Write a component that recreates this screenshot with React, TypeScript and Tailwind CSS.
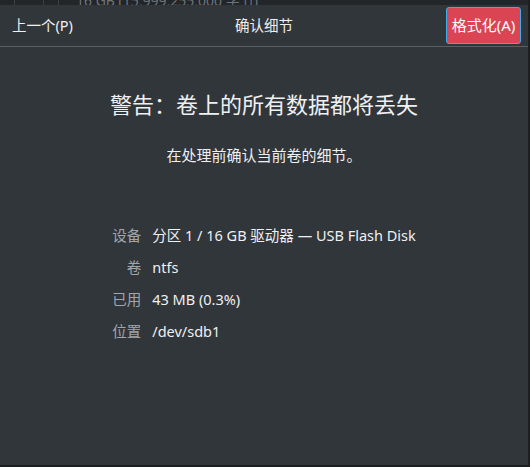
import React from "react";

const font = { fontFamily: '"Noto Sans", "Noto Sans CJK SC", sans-serif' };

const details: { label: string; value: string }[] = [
  { label: "设备", value: "分区 1 / 16 GB 驱动器 — USB Flash Disk" },
  { label: "卷", value: "ntfs" },
  { label: "已用", value: "43 MB (0.3%)" },
  { label: "位置", value: "/dev/sdb1" },
];

const App: React.FC = () => {
  return (
    <div className="w-[530px] h-[467px] bg-[#1c1f22] overflow-hidden" style={font}>
      <div className="w-[528px] h-[465px] flex flex-col bg-[#31363b]">
        {/* window behind, peeking out at the top */}
        <div className="h-[5px] bg-[#232629] overflow-hidden relative shrink-0">
          <div className="absolute left-[14px] top-0 h-full border-l border-[#3b4045]" />
          <div className="absolute left-[43px] top-0 h-full border-l border-[#3b4045]" />
          <div className="absolute left-[58px] top-0 h-full border-l border-[#3b4045]" />
          <div className="absolute left-[76px] -top-[10px] text-[14px] text-[#6e7378] whitespace-nowrap">
            16 GB (15,999,255,000 字节)
          </div>
        </div>

        {/* header bar */}
        <div className="h-[42px] shrink-0 flex items-center border-b border-[#5a5f64] px-[12px] relative">
          <span className="text-[14.5px] text-[#eff0f1]">上一个(P)</span>
          <span className="absolute left-0 right-0 text-center text-[14.5px] text-[#eff0f1] pointer-events-none">
            确认细节
          </span>
          <button className="ml-auto -mr-[5px] w-[75px] h-[37px] rounded-[3px] bg-[#da4453] border border-[#3daee9] text-[15px] text-[#fcfcfc]">
            格式化(A)
          </button>
        </div>

        {/* body */}
        <div className="flex flex-col items-center">
          <h1 className="mt-[42px] text-[22px] leading-[30px] text-[#eff0f1]">
            警告：卷上的所有数据都将丢失
          </h1>
          <p className="mt-[26px] text-[15px] leading-[20px] text-[#eff0f1]">
            在处理前确认当前卷的细节。
          </p>

          <div className="mt-[55px] grid grid-cols-[auto_auto] gap-x-[11px] text-[14.5px]">
            {details.map((d) => (
              <React.Fragment key={d.label}>
                <div className="h-[32px] flex items-center justify-end text-[#a1a6ab]">{d.label}</div>
                <div className="h-[32px] flex items-center text-[#eff0f1]">{d.value}</div>
              </React.Fragment>
            ))}
          </div>
        </div>
      </div>
    </div>
  );
};

export default App;
